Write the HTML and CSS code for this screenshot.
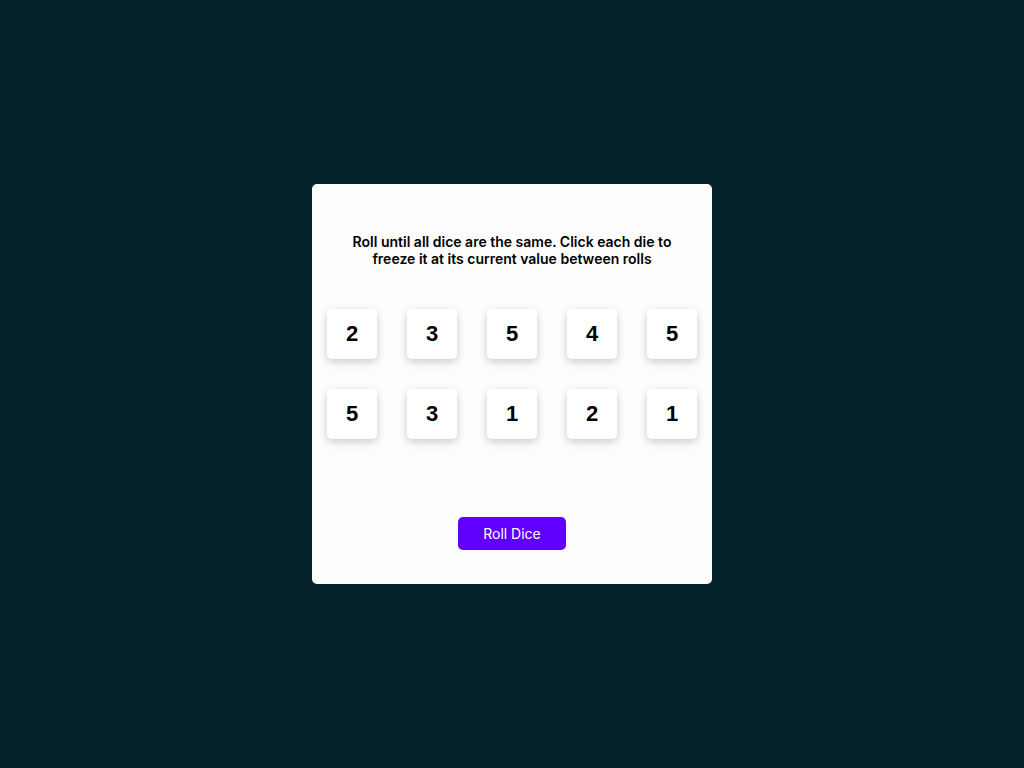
FILE: index.html
```html
<!DOCTYPE html>
<html>
<head>
<meta charset="utf-8">
<link rel="stylesheet" href="styles.css">
</head>
<body>
<main class="card">
  <p class="intro">Roll until all dice are the same. Click each die to freeze it at its current value between rolls</p>
  <div class="dice">
    <div class="die">2</div>
    <div class="die">3</div>
    <div class="die">5</div>
    <div class="die">4</div>
    <div class="die">5</div>
    <div class="die">5</div>
    <div class="die">3</div>
    <div class="die">1</div>
    <div class="die">2</div>
    <div class="die">1</div>
  </div>
  <button class="roll">Roll Dice</button>
</main>
</body>
</html>
```

FILE: styles.css
```css
html, body {
  margin: 0;
  height: 100%;
}
body {
  background: #05232a;
  display: flex;
  align-items: center;
  justify-content: center;
  font-family: Inter, "Liberation Sans", sans-serif;
}
.card {
  width: 400px;
  height: 400px;
  box-sizing: border-box;
  background: #fdfdfd;
  border-radius: 5px;
  padding: 49px 15px 0;
  display: flex;
  flex-direction: column;
  align-items: center;
}
.intro {
  margin: 0;
  padding: 0 20px;
  font-size: 14px;
  line-height: 17px;
  font-weight: 600;
  color: #000;
  text-align: center;
}
.dice {
  margin-top: 42px;
  display: grid;
  grid-template-columns: repeat(5, 50px);
  gap: 30px;
}
.die {
  width: 50px;
  height: 50px;
  background: #fff;
  border-radius: 5px;
  box-shadow: 0 3px 8px rgba(0, 0, 0, 0.2);
  display: flex;
  align-items: center;
  justify-content: center;
  font-family: "Liberation Sans", Arial, sans-serif;
  font-size: 22px;
  font-weight: 700;
  color: #000;
}
.roll {
  margin-top: 78px;
  width: 108px;
  height: 33px;
  border: none;
  border-radius: 5px;
  background: #5f00ff;
  color: #fff;
  font-family: Inter, "Liberation Sans", sans-serif;
  font-size: 14px;
  padding: 0;
  cursor: pointer;
}
```
